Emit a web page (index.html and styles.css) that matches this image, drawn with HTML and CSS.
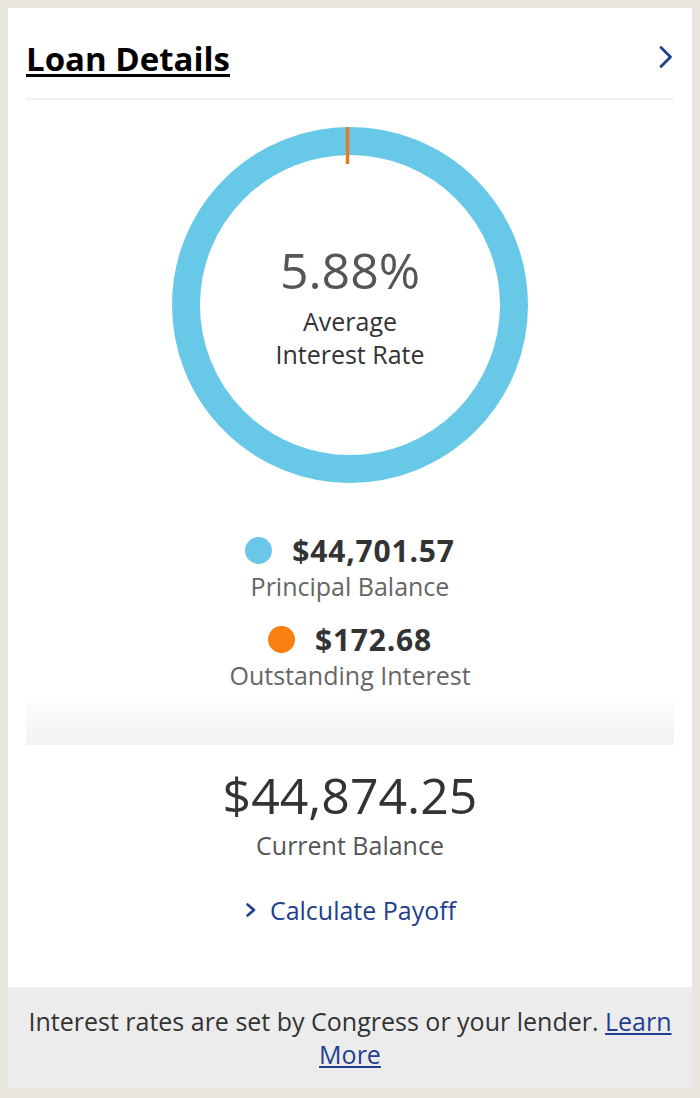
FILE: index.html
```html
<!DOCTYPE html>
<html>
<head>
<meta charset="utf-8">
<link rel="stylesheet" href="styles.css">
</head>
<body>
<div class="page">
  <div class="card">
    <div class="header">
      <h1 class="title">Loan Details</h1>
      <svg class="chev" width="16" height="24" viewBox="0 0 16 24"><path d="M3 2.5 L12.5 12 L3 21.5" fill="none" stroke="#1f3f8f" stroke-width="2.8" stroke-linecap="round" stroke-linejoin="round"/></svg>
    </div>
    <div class="donut-wrap">
      <div class="donut">
        <svg width="356" height="356" viewBox="0 0 356 356">
          <circle cx="178" cy="178" r="164" fill="none" stroke="#68c8e7" stroke-width="28"/>
          <line x1="175.5" y1="0" x2="175.5" y2="37" stroke="#e07b28" stroke-width="3.5"/>
        </svg>
        <div class="donut-text">
          <div class="rate">5.88%</div>
          <div class="rate-label">Average<br>Interest Rate</div>
        </div>
      </div>
    </div>
    <div class="legend">
      <div class="item">
        <div class="row"><span class="dot blue"></span><span class="amt">$44,701.57</span></div>
        <div class="lbl">Principal Balance</div>
      </div>
      <div class="item">
        <div class="row"><span class="dot orange"></span><span class="amt">$172.68</span></div>
        <div class="lbl">Outstanding Interest</div>
      </div>
    </div>
    <div class="band"></div>
    <div class="balance">
      <div class="bal-amt">$44,874.25</div>
      <div class="bal-lbl">Current Balance</div>
      <a class="payoff" href="#"><svg width="14" height="18" viewBox="0 0 14 18"><path d="M3.5 3.5 L10 9 L3.5 14.5" fill="none" stroke="#1f3f8f" stroke-width="2.6" stroke-linecap="round" stroke-linejoin="round"/></svg>Calculate Payoff</a>
    </div>
    <div class="footer">Interest rates are set by Congress or your lender. <a href="#">Learn More</a></div>
  </div>
</div>
</body>
</html>
```
FILE: styles.css
```css
html, body { margin: 0; padding: 0; }
body { background: #e9e6df; font-family: "Open Sans", "Noto Sans", sans-serif; }
.page { padding: 8px; }
.card { background: #fff; }
.header {
  margin: 0 18px;
  height: 88px;
  padding-top: 2px;
  display: flex;
  align-items: center;
  justify-content: space-between;
  border-bottom: 2px solid #f1f1f1;
}
.title {
  margin: 8px 0 0 0;
  font-size: 33px;
  font-weight: 700;
  letter-spacing: 0;
  color: #000;
  text-decoration: underline;
  text-decoration-thickness: 3px;
  text-underline-offset: 3px;
}
.chev { margin-right: 0; margin-top: 6px; }
.donut-wrap { display: flex; justify-content: center; padding-top: 27px; }
.donut { position: relative; width: 356px; height: 356px; }
.donut svg { display: block; }
.donut-text {
  position: absolute; inset: 0;
  display: flex; flex-direction: column; align-items: center; justify-content: center;
}
.rate { font-size: 50px; color: #555; line-height: 60px; }
.rate-label { font-size: 25px; color: #333; line-height: 33px; text-align: center; margin-top: 5px; }
.legend { display: flex; flex-direction: column; align-items: center; gap: 17px; padding-top: 49px; }
.item { display: flex; flex-direction: column; align-items: center; }
.row { display: flex; align-items: center; gap: 20px; height: 36px; }
.dot { width: 27px; height: 27px; border-radius: 50%; display: block; }
.dot.blue { background: #6ac7e8; }
.dot.orange { background: #f97f10; }
.amt { font-size: 30px; font-weight: 700; color: #333; letter-spacing: 0.8px; }
.lbl { font-size: 25px; color: #666; line-height: 36px; }
.band {
  margin: 5px 18px 0;
  height: 47px;
  background: linear-gradient(#fefefe, #f2f2f2);
}
.balance { display: flex; flex-direction: column; align-items: center; padding: 20px 0 60px; }
.bal-amt { font-size: 50px; color: #333; line-height: 60px; }
.bal-lbl { font-size: 25px; color: #555; line-height: 40px; }
.payoff {
  margin-top: 28px;
  display: flex; align-items: center; gap: 12px;
  font-size: 25px; color: #1f3f8f; text-decoration: none; line-height: 34px;
}
.footer {
  background: #ececec;
  text-align: center;
  font-size: 25px;
  line-height: 33px;
  color: #333;
  padding: 18px 18px 17px;
}
.footer a { color: #1f3f8f; text-decoration: underline; }
```
